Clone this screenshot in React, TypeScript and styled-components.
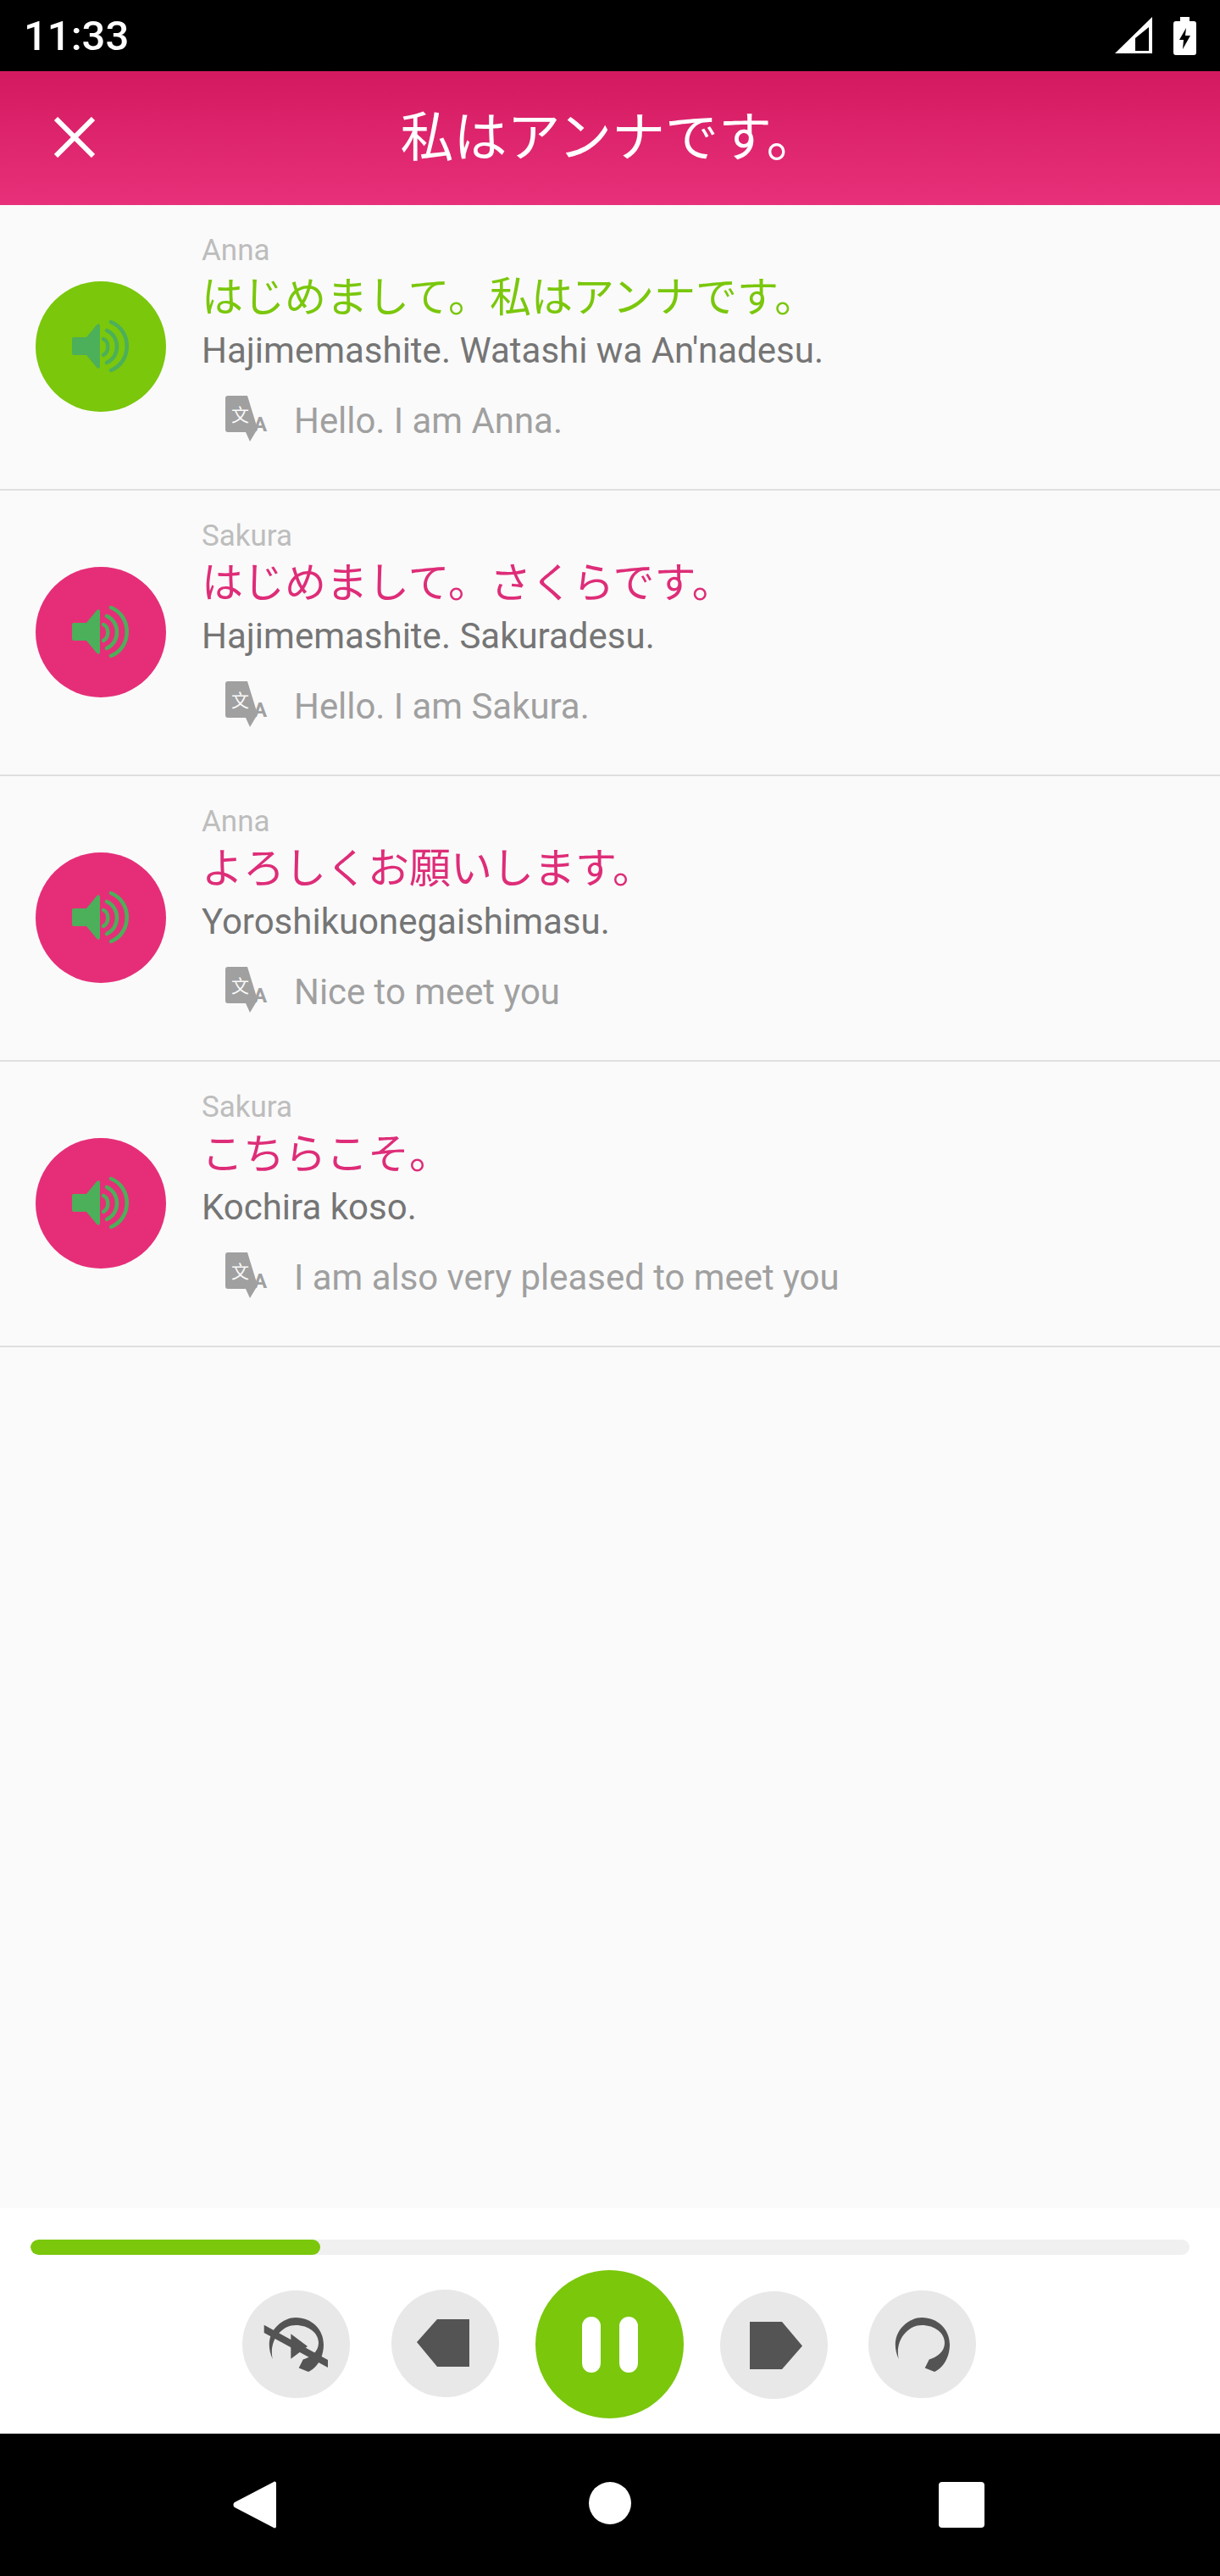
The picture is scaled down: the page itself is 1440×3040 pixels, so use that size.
import React from "react";
import styled, { createGlobalStyle } from "styled-components";

const GlobalStyle = createGlobalStyle`
  html, body {
    margin: 0;
    padding: 0;
    background: #fafafa;
    font-family: Roboto, "Noto Sans CJK JP", sans-serif;
  }
  * {
    box-sizing: border-box;
  }
`;

const GREEN = "#7ac70c";
const PINK = "#e62e78";

const Screen = styled.div`
  width: 1440px;
  height: 3040px;
  display: flex;
  flex-direction: column;
  background: #fafafa;
  overflow: hidden;
`;

const StatusBar = styled.div`
  height: 84px;
  flex: none;
  background: #000;
  color: #fff;
  display: flex;
  align-items: center;
  justify-content: space-between;
  padding: 0 28px 0 28px;
`;

const Clock = styled.span`
  font-size: 49px;
  font-weight: 500;
  line-height: 84px;
  padding-top: 2px;
`;

const StatusIcons = styled.div`
  display: flex;
  align-items: center;
  gap: 25px;
`;

const Header = styled.header`
  height: 158px;
  flex: none;
  position: relative;
  display: flex;
  align-items: center;
  justify-content: center;
  background: linear-gradient(180deg, #d31a60 0%, #e8307a 100%);
`;

const CloseButton = styled.div`
  position: absolute;
  left: 64px;
  top: 54px;
  width: 48px;
  height: 48px;
`;

const Title = styled.h1`
  margin: 0;
  font-size: 63px;
  font-weight: 400;
  line-height: 158px;
  color: #fff;
`;

const List = styled.div`
  flex: 1;
  min-height: 0;
  display: flex;
  flex-direction: column;
  background: #fafafa;
`;

const Row = styled.div`
  height: 337px;
  flex: none;
  display: flex;
  align-items: center;
  padding-left: 42px;
  padding-bottom: 1px;
  border-bottom: 2px solid #dfdfdf;
`;

const SpeakerCircle = styled.div<{ $color: string }>`
  width: 154px;
  height: 154px;
  flex: none;
  border-radius: 50%;
  background: ${(p) => p.$color};
`;

const Lines = styled.div`
  align-self: flex-start;
  margin-left: 42px;
  padding-top: 32px;
  display: flex;
  flex-direction: column;
`;

const Speaker = styled.div`
  font-size: 35px;
  line-height: 44px;
  color: #bdbdbd;
`;

const Japanese = styled.div<{ $color: string }>`
  font-size: 49px;
  line-height: 64px;
  margin-top: 2px;
  color: ${(p) => p.$color};
`;

const Romaji = styled.div`
  font-size: 42px;
  line-height: 60px;
  color: #757575;
`;

const Translation = styled.div`
  display: flex;
  align-items: center;
  margin-top: 23px;
  padding-left: 28px;
  font-size: 41.9px;
  line-height: 60px;
  color: #a0a0a0;
`;

const TranslateMark = styled.svg`
  width: 50px;
  height: 54px;
  flex: none;
  margin-right: 31px;
  margin-bottom: 6px;
`;

const Player = styled.div`
  height: 266px;
  flex: none;
  background: #fff;
  padding: 37px 36px 0;
`;

const Track = styled.div`
  height: 18px;
  border-radius: 9px;
  background: #f0f0f0;
  overflow: hidden;
`;

const TrackFill = styled.div`
  height: 100%;
  border-radius: 9px;
  background: ${GREEN};
`;

const Controls = styled.div`
  margin-top: 18px;
  height: 175px;
  display: flex;
  align-items: center;
  justify-content: center;
  gap: 43px;
  padding-right: 2px;
`;

const RoundButton = styled.div<{ $shift?: number; $before?: number; $after?: number }>`
  width: 127px;
  height: 127px;
  flex: none;
  border-radius: 50%;
  background: #e8e8e8;
  margin-top: ${(p) => (p.$shift ?? 0) * 2}px;
  margin-left: ${(p) => p.$before ?? 0}px;
  margin-right: ${(p) => p.$after ?? 0}px;
`;

const PauseButton = styled.div`
  width: 175px;
  height: 175px;
  flex: none;
  border-radius: 50%;
  background: ${GREEN};
  display: flex;
  align-items: center;
  justify-content: center;
  gap: 22px;
`;

const PauseBar = styled.span`
  width: 22px;
  height: 66px;
  border-radius: 11px;
  background: #fff;
`;

const NavBar = styled.nav`
  height: 168px;
  flex: none;
  background: #000;
  position: relative;
  display: flex;
  align-items: center;
  justify-content: center;
`;

const NavBack = styled.svg`
  position: absolute;
  left: 275px;
  top: 56px;
  width: 51px;
  height: 56px;
`;

const NavHome = styled.div`
  width: 50px;
  height: 50px;
  border-radius: 50%;
  background: #fff;
  margin-bottom: 4px;
`;

const NavRecent = styled.div`
  position: absolute;
  left: 1108px;
  top: 57px;
  width: 54px;
  height: 54px;
  border-radius: 4px;
  background: #fff;
`;

const ICON_GREY = "#545454";
const LOOP_ARC =
  "M35.7 81C29 66 31 52 41 42C48 35 56 32 63 32C82 32 96 46 96 64C96 78 89 91 78 96L66.7 91.5L71.7 81.5C81 79 90 72 90 62C90 50 78 41 63 41C47 41 31 58 35.7 81Z";

const SpeakerIcon = () => (
  <svg width="154" height="154" viewBox="0 0 154 154" fill="none">
    <path
      d="M43 68a2 2 0 0 1 2-2H60L72 51.5C74 49.5 76 50 76 53V100C76 103 74 103.500 72 101.500L60 87H45a2 2 0 0 1-2-2Z"
      fill="#4caf5a"
    />
    <g stroke="#4caf5a" strokeWidth="4.500" strokeLinecap="round">
      <path d="M80 68C87 71 87 83 80 87" />
      <path d="M84 58C100 65 100 89 84 96" />
      <path d="M89 48C114 58 114 95 89 105" />
    </g>
  </svg>
);

const TranslateIcon = () => (
  <TranslateMark viewBox="0 0 50 54">
    <path
      d="M3 0H26L38 39L29 54L24 43H3C1 43 0 42 0 40V3C0 1 1 0 3 0Z"
      fill="#a0a0a0"
    />
    <text x="33" y="42" fontSize="24" fontWeight="700" fill="#a0a0a0" fontFamily="Roboto, sans-serif">
      A
    </text>
    <text x="7" y="30" fontSize="21" fill="#fafafa" fontFamily="'Noto Sans CJK SC', sans-serif">
      文
    </text>
  </TranslateMark>
);

const lines = [
  {
    name: "Anna",
    jp: "はじめまして。私はアンナです。",
    romaji: "Hajimemashite. Watashi wa An'nadesu.",
    en: "Hello. I am Anna.",
    active: true,
  },
  {
    name: "Sakura",
    jp: "はじめまして。さくらです。",
    romaji: "Hajimemashite. Sakuradesu.",
    en: "Hello. I am Sakura.",
  },
  {
    name: "Anna",
    jp: "よろしくお願いします。",
    romaji: "Yoroshikuonegaishimasu.",
    en: "Nice to meet you",
  },
  {
    name: "Sakura",
    jp: "こちらこそ。",
    romaji: "Kochira koso.",
    en: "I am also very pleased to meet you",
  },
];

export default function App() {
  return (
    <Screen>
      <GlobalStyle />
      <StatusBar>
        <Clock>11:33</Clock>
        <StatusIcons>
          <svg width="44" height="44" viewBox="0 0 44 44">
            <path fillRule="evenodd" d="M44 0V43H0ZM24 40H40V12L24 25Z" fill="#fff" />
          </svg>
          <svg width="27" height="45" viewBox="0 0 27 45">
            <path
              fillRule="evenodd"
              d="M8 0H19V5H24C26 5 27 6 27 8V42C27 44 26 45 24 45H3C1 45 0 44 0 42V8C0 6 1 5 3 5H8ZM15 13L7 27H12L11 38L20 22H14Z"
              fill="#fff"
            />
          </svg>
        </StatusIcons>
      </StatusBar>
      <Header>
        <CloseButton>
          <svg width="48" height="48" viewBox="0 0 48 48">
            <path d="M2 2L46 46M46 2L2 46" stroke="#fff" strokeWidth="6" />
          </svg>
        </CloseButton>
        <Title>私はアンナです。</Title>
      </Header>
      <List>
        {lines.map((line, i) => (
          <Row key={i}>
            <SpeakerCircle $color={line.active ? GREEN : PINK}>
              <SpeakerIcon />
            </SpeakerCircle>
            <Lines>
              <Speaker>{line.name}</Speaker>
              <Japanese $color={line.active ? GREEN : "#de2d78"}>{line.jp}</Japanese>
              <Romaji>{line.romaji}</Romaji>
              <Translation>
                <TranslateIcon />
                {line.en}
              </Translation>
            </Lines>
          </Row>
        ))}
      </List>
      <Player>
        <Track>
          <TrackFill style={{ width: `${(342 / 1368) * 100}%` }} />
        </Track>
        <Controls>
          <RoundButton $after={6}>
            <svg width="127" height="127" viewBox="0 0 127 127" fill={ICON_GREY}>
              <path d={LOOP_ARC} />
              <path d="M57.300 51.300L77 66L57.300 80.700Z" />
              <path d="M25.700 40.700L101 82V91L25.700 50Z" />
            </svg>
          </RoundButton>
          <RoundButton $shift={-1}>
            <svg width="127" height="127" viewBox="0 0 127 127" fill={ICON_GREY}>
              <path d="M30 62L54 35H92V91H54Z" />
            </svg>
          </RoundButton>
          <PauseButton>
            <PauseBar />
            <PauseBar />
          </PauseButton>
          <RoundButton $shift={1}>
            <svg width="127" height="127" viewBox="0 0 127 127" fill={ICON_GREY}>
              <path d="M35 36H73L97 64.500L73 92H35Z" />
            </svg>
          </RoundButton>
          <RoundButton $before={5}>
            <svg width="127" height="127" viewBox="0 0 127 127" fill={ICON_GREY}>
              <path d={LOOP_ARC} />
            </svg>
          </RoundButton>
        </Controls>
      </Player>
      <NavBar>
        <NavBack viewBox="0 0 51 56">
          <path d="M48 1C50 0 51 1 51 3V53C51 55 50 56 48 55L2 31C0 30 0 26 2 25Z" fill="#fff" />
        </NavBack>
        <NavHome />
        <NavRecent />
      </NavBar>
    </Screen>
  );
}
